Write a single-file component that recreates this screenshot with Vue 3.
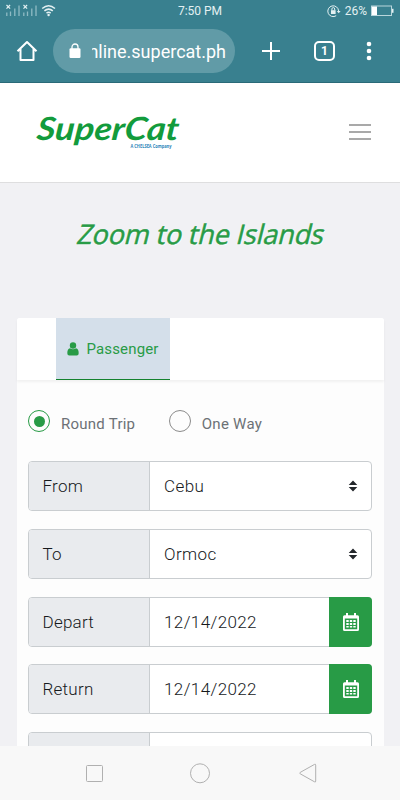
<template>
  <div class="screen">
    <header class="browser">
      <div class="status">
        <svg class="status_signal" width="52" height="14" viewBox="0 0 52 14">
          <g v-for="x in [0, 17]" :key="x" :transform="`translate(${x} 0)`">
            <path d="M0.5 1l3.6 3.6M4.100 1l-3.600 3.600" stroke="#e3f0f2" stroke-width="1.200" />
            <path d="M0.800 8.500v3.500M4.500 7.500v4.500M8.800 4.500v7.500M13 1.500v10.500" stroke="#8fbac4" stroke-width="1.300" />
          </g>
          <g fill="none" stroke="#e3f0f2" stroke-width="1.500">
            <path d="M36.200 4.500q6.400-5.600 12.800 0" />
            <path d="M38.400 6.900q4.200-3.600 8.400 0" />
            <path d="M40.500 9.200q2.100-1.700 4.200 0" />
          </g>
          <circle cx="42.600" cy="11" r="1.200" fill="#e3f0f2" />
        </svg>
        <span class="status_time">7:50 PM</span>
        <div class="status_right">
          <svg width="14" height="14" viewBox="0 0 14 14" fill="none" stroke="#e3f0f2">
            <path d="M9.200 11.700a5.400 5.400 0 1 1 2.400-4.700" />
            <path d="M9.800 7h3.800l-1.900 2.200z" fill="#e3f0f2" stroke="none" />
            <rect x="4" y="6.200" width="4.600" height="3.800" fill="#e3f0f2" stroke="none" />
            <path d="M4.900 6.200v-1.200a1.400 1.400 0 0 1 2.800 0v1.200" />
          </svg>
          <span class="status_percent">26%</span>
          <svg width="23" height="12" viewBox="0 0 23 12">
            <rect x="0.500" y="1" width="20" height="9.500" fill="none" stroke="#b9d6dc" />
            <rect x="1" y="1.500" width="5" height="8.500" fill="#fff" />
            <rect x="21" y="3.800" width="1.500" height="4" fill="#e3f0f2" />
          </svg>
        </div>
      </div>
      <div class="toolbar">
        <svg class="home" width="22" height="22" viewBox="0 0 22 22" fill="none" stroke="#fff" stroke-width="2">
          <path d="M1.500 11.200L11 2l9.500 9.200M4.500 9v11h13v-11" stroke-linejoin="round" />
        </svg>
        <div class="url">
          <svg width="12" height="16" viewBox="0 0 12 16">
            <rect x="0.500" y="5.300" width="11" height="9.700" rx="1.200" fill="#fff" />
            <path d="M3 6v-2a3 3 0 0 1 6 0v2" fill="none" stroke="#fff" stroke-width="1.300" />
          </svg>
          <div class="url_clip"><span class="url_text">online.supercat.ph</span></div>
        </div>
        <svg class="plus" width="18" height="18" viewBox="0 0 18 18">
          <path d="M9 0v18M0 9h18" stroke="#fff" stroke-width="2" />
        </svg>
        <div class="tabs_count">1</div>
        <svg class="dots" width="6" height="20" viewBox="0 0 6 20" fill="#fff">
          <circle cx="3" cy="3" r="2.300" />
          <circle cx="3" cy="10" r="2.300" />
          <circle cx="3" cy="17" r="2.300" />
        </svg>
      </div>
    </header>

    <nav class="site_nav">
      <svg class="logo" width="146" height="40" viewBox="0 0 146 40">
        <text class="logo_name" transform="translate(1 28) skewX(-6)" textLength="142" lengthAdjust="spacingAndGlyphs">SuperCat</text>
        <text class="logo_sub" x="95.500" y="35.500" textLength="41" lengthAdjust="spacingAndGlyphs">A CHELSEA Company</text>
      </svg>
      <div class="burger"><i></i><i></i><i></i></div>
    </nav>

    <main class="page">
      <h1 class="title">Zoom to the Islands</h1>
      <section class="card">
        <div class="card_tabs">
          <div class="tab">
            <svg width="12" height="14" viewBox="0 0 12 14" fill="#289b46">
              <circle cx="6" cy="3.500" r="3.200" />
              <path d="M3 6.200q3 2.300 6 0q2.700 0.600 2.700 5q0 2.300-2 2.300h-7.400q-2 0-2-2.300q0-4.400 2.700-5z" />
            </svg>
            <span>Passenger</span>
          </div>
        </div>
        <form class="form">
          <div class="radios">
            <div v-for="t in trips" :key="t" class="radio" @click="trip = t">
              <span class="radio_dot" :class="{ checked: trip === t }"></span>
              <span class="radio_label">{{ t }}</span>
            </div>
          </div>
          <div v-for="f in fields" :key="f.label" class="row">
            <div class="row_label">{{ f.label }}</div>
            <div class="row_value">{{ f.value }}</div>
            <svg v-if="f.type === 'select'" class="arrows" width="10" height="12" viewBox="0 0 10 12" fill="#23272b">
              <path d="M0.700 5L5 0.600L9.300 5zM0.700 7h8.600l-4.300 4.400z" />
            </svg>
            <div v-if="f.type === 'date'" class="row_btn">
              <svg width="16" height="18" viewBox="0 0 16 18" fill="#fff">
                <path fill-rule="evenodd" d="M1.500 2.200h13q1.500 0 1.500 1.500v12.800q0 1.500-1.500 1.500h-13q-1.500 0-1.500-1.500v-12.800q0-1.500 1.500-1.500zM1.800 5.600v10.600h12.400v-10.600z" />
                <path d="M3 0h2v3h-2zM11 0h2v3h-2z" />
                <path d="M3.300 7h2.400v1.900h-2.400zM6.800 7h2.400v1.900h-2.400zM10.300 7h2.400v1.900h-2.400zM3.300 10h2.400v1.900h-2.400zM6.800 10h2.400v1.900h-2.400zM10.300 10h2.400v1.900h-2.400zM3.300 12.900h2.400v1.500h-2.400zM6.800 12.900h2.400v1.500h-2.400zM10.300 12.900h2.400v1.500h-2.400z" />
              </svg>
            </div>
          </div>
        </form>
      </section>
    </main>

    <footer class="android_nav">
      <svg width="400" height="54" viewBox="0 0 400 54" fill="none" stroke="#b0b0b0">
        <rect x="86.500" y="19.500" width="16" height="16" rx="1" />
        <circle cx="200" cy="27.300" r="9.500" />
        <path d="M314.500 18.400q1.200-0.600 1.200 0.700v16q0 1.400-1.200 0.700l-14.300-8q-1-0.700 0-1.400z" />
      </svg>
    </footer>
  </div>
</template>

<script setup>
import { ref } from 'vue'

const trips = ['Round Trip', 'One Way']
const trip = ref('Round Trip')

const fields = [
  { label: 'From', value: 'Cebu', type: 'select' },
  { label: 'To', value: 'Ormoc', type: 'select' },
  { label: 'Depart', value: '12/14/2022', type: 'date' },
  { label: 'Return', value: '12/14/2022', type: 'date' },
  { label: '', value: '', type: 'text' }
]
</script>

<style>
body {
  margin: 0;
}
</style>

<style scoped>
.screen {
  display: flex;
  flex-direction: column;
  width: 400px;
  height: 800px;
  overflow: hidden;
  background: #f1f1f4;
  font-family: Roboto, "Liberation Sans", sans-serif;
}

.screen * {
  box-sizing: border-box;
}

.browser {
  flex: none;
  height: 83px;
  background: #39808f;
  border-bottom: 1px solid #2a6a78;
}

.status {
  display: grid;
  grid-template-columns: 1fr auto 1fr;
  align-items: center;
  height: 21px;
  color: #e3f0f2;
  font-size: 12px;
}

.status_signal {
  margin-left: 6px;
}

.status_right {
  display: flex;
  align-items: center;
  justify-content: flex-end;
  padding-right: 6px;
}

.status_percent {
  margin: 0 4px 0 4px;
}

.toolbar {
  display: flex;
  align-items: center;
  height: 60px;
}

.home {
  margin-left: 16px;
}

.url {
  display: flex;
  align-items: center;
  width: 182px;
  height: 44px;
  margin-left: 15px;
  padding-left: 16px;
  border-radius: 22px;
  background: #619ba7;
}

.url_clip {
  display: flex;
  justify-content: flex-end;
  width: 134px;
  margin-left: 11px;
  overflow: hidden;
  color: #fff;
  font-size: 18px;
}

.url_text {
  flex: none;
}

.plus {
  margin-left: 27px;
}

.tabs_count {
  width: 21px;
  height: 20px;
  margin-left: 34px;
  border: 2px solid #fff;
  border-radius: 5px;
  color: #fff;
  font-size: 12px;
  font-weight: 700;
  line-height: 16px;
  text-align: center;
}

.dots {
  margin-left: 31px;
}

.site_nav {
  display: flex;
  flex: none;
  justify-content: space-between;
  height: 100px;
  padding: 29px 29px 0 35px;
  background: #fff;
  border-bottom: 1px solid #dededf;
}

.logo {
  overflow: visible;
}

.logo_name {
  font-family: Lato, sans-serif;
  font-size: 32px;
  font-style: italic;
  font-weight: 700;
  fill: #129b3c;
}

.logo_sub {
  font-family: "Open Sans", sans-serif;
  font-size: 4.5px;
  font-weight: 700;
  fill: #2b83b8;
}

.burger {
  display: flex;
  flex-direction: column;
  gap: 5px;
  width: 22px;
  margin-top: 12px;
}

.burger i {
  height: 2px;
  background: #a9a9a9;
}

.page {
  flex: 1;
  min-height: 0;
  overflow: hidden;
}

/* upright face slanted by hand, the real italic has different letterforms */
.title {
  height: 36px;
  margin: 33px 0 66px;
  padding-left: 3px;
  color: #289b46;
  font-family: "Open Sans", sans-serif;
  font-size: 27px;
  font-weight: 500;
  line-height: 36px;
  letter-spacing: -0.15px;
  text-align: center;
  white-space: nowrap;
  text-shadow: 1px 1px 1px #fff;
  -webkit-text-stroke: 0.5px #289b46;
  transform: skewX(-14deg);
}

.card {
  height: 500px;
  margin: 0 16.5px;
  border-radius: 3px;
  background: #fdfdfd;
}

.card_tabs {
  height: 62px;
  padding-left: 39px;
  border-radius: 3px 3px 0 0;
  background: #fff;
  box-shadow: 0 2px 3px rgba(0, 0, 0, 0.05);
}

.tab {
  display: flex;
  align-items: center;
  gap: 8px;
  width: 114.5px;
  height: 62px;
  padding-left: 11px;
  border-bottom: 1px solid #14822f;
  background: #d4dfea;
  color: #289b46;
  font-size: 15px;
  letter-spacing: 0.15px;
}

.form {
  padding: 30px 11.5px 0;
}

.radios {
  display: flex;
  height: 51px;
}

.radio {
  display: flex;
  height: 22px;
  margin-right: 33.5px;
}

.radio_dot {
  display: flex;
  align-items: center;
  justify-content: center;
  width: 22px;
  height: 22px;
  border: 1px solid #8b8b8b;
  border-radius: 50%;
}

.radio_dot.checked {
  border-color: #289b46;
}

.radio_dot.checked::after {
  content: '';
  width: 11px;
  height: 11px;
  border-radius: 50%;
  background: #289b46;
}

.radio_label {
  margin: 4px 0 0 11px;
  color: #6c7176;
  font-size: 15px;
  line-height: 20px;
  letter-spacing: 0.25px;
}

.row {
  display: flex;
  align-items: center;
  height: 50px;
  margin-bottom: 17.75px;
  border: 1px solid #c9cdd0;
  border-radius: 4px;
  background: #fff;
  color: #16191c;
  font-size: 17px;
  font-weight: 300;
  letter-spacing: 0.4px;
}

.row_label {
  display: flex;
  align-items: center;
  width: 121px;
  height: 48px;
  padding-left: 13.5px;
  border-right: 1px solid #c9cdd0;
  border-radius: 3px 0 0 3px;
  background: #e9ebee;
  letter-spacing: 0.25px;
}

.row_value {
  flex: 1;
  padding-left: 14px;
}

.arrows {
  margin-right: 13px;
}

.row_btn {
  display: flex;
  align-items: center;
  justify-content: center;
  width: 43px;
  height: 50px;
  margin-right: -1px;
  border-radius: 0 4px 4px 0;
  background: #289b46;
}

.android_nav {
  flex: none;
  height: 54px;
  background: #f8f8f8;
}
</style>
